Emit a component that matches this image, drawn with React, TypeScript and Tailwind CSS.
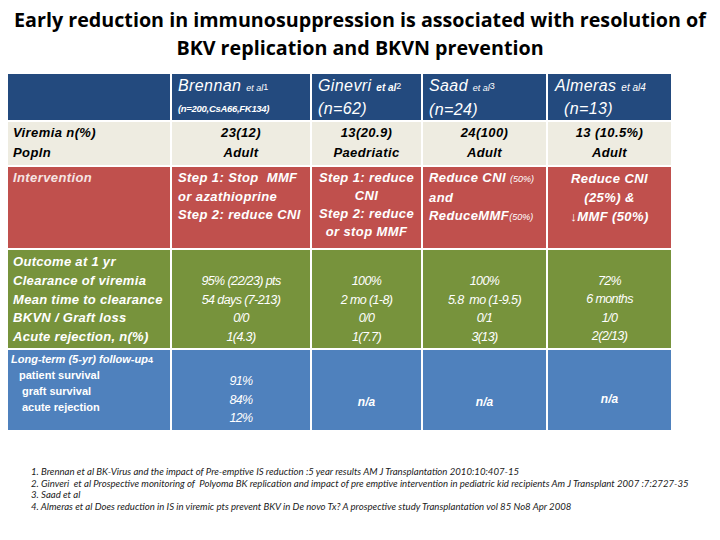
import React from 'react'

const arial = { fontFamily: '"Liberation Sans", Arial, sans-serif' }

const Sup = ({ children }: { children: React.ReactNode }) => (
  <span className="text-[9px] not-italic align-top relative top-[1px]">{children}</span>
)

const Lines = ({ lines, className = '' }: { lines: string[]; className?: string }) => (
  <div className={className}>
    {lines.map((l, i) => (
      <div key={i} className="whitespace-pre">
        {l || '\u00a0'}
      </div>
    ))}
  </div>
)

// condensed figures in the outcome / follow-up cells
const num = 'text-white text-[12.5px] tracking-[-0.6px] text-center'

const footnotes = [
  '1. Brennan et al BK-Virus and the impact of Pre-emptive IS reduction :5 year results AM J Transplantation 2010:10:407-15',
  '2. Ginveri  et al Prospective monitoring of  Polyoma BK replication and impact of pre emptive intervention in pediatric kid recipients Am J Transplant 2007 :7:2727-35',
  '3. Saad et al',
  '4. Almeras et al Does reduction in IS in viremic pts prevent BKV in De novo Tx? A prospective study Transplantation vol 85 No8 Apr 2008',
]

export default function App() {
  return (
    <div className="w-[720px] h-[540px] bg-white overflow-hidden">
      <div
        className="pt-[6px] text-center font-bold text-[19.7px] leading-[28px] text-black"
        style={{ fontFamily: '"Open Sans", Lato, sans-serif' }}
      >
        <div>Early reduction in immunosuppression is associated with resolution of</div>
        <div>BKV replication and BKVN prevention</div>
      </div>

      <div
        className="mt-[12px] ml-[8px] w-[663px] grid grid-cols-[162px_138px_109px_123px_123px] grid-rows-[46px_43px_81px_98px_80px] gap-[2px] bg-white italic tracking-[0.4px]"
        style={arial}
      >
        {/* header */}
        <div className="bg-[#234a7e]" />
        <div className="bg-[#234a7e] text-white pl-[6px] pt-[1px]">
          <div className="text-[16px] leading-[22px]">
            Brennan <span className="text-[9px] tracking-normal">et al</span>
            <Sup>1</Sup>
          </div>
          <div className="text-[9.5px] font-bold leading-[20px] tracking-[-0.3px]">(n=200,CsA66,FK134)</div>
        </div>
        <div className="bg-[#234a7e] text-white pl-[6px] pt-[1px] text-[16px] leading-[21px]">
          <div>
            Ginevri <span className="text-[10px] font-bold tracking-normal">et al</span>
            <Sup>2</Sup>
          </div>
          <div>(n=62)</div>
        </div>
        <div className="bg-[#234a7e] text-white pl-[6px] pt-[1px] text-[16px] leading-[21px]">
          <div>
            Saad <span className="text-[9px] tracking-normal">et al</span>
            <Sup>3</Sup>
          </div>
          <div>(n=24)</div>
        </div>
        <div className="bg-[#234a7e] text-white pl-[7px] pt-[1px] text-[16px] leading-[21px]">
          <div>
            Almeras <span className="text-[10px] tracking-normal">et al4</span>
          </div>
          <div className="pl-[9px]">(n=13)</div>
        </div>

        {/* viremia */}
        <Lines
          lines={['Viremia n(%)', 'Popln']}
          className="bg-[#eeece1] text-black font-bold text-[13px] leading-[20px] pl-[5px] pt-[1px]"
        />
        <Lines
          lines={['23(12)', 'Adult']}
          className="bg-[#eeece1] text-black font-bold text-[13px] leading-[20px] text-center pt-[1px]"
        />
        <Lines
          lines={['13(20.9)', 'Paedriatic']}
          className="bg-[#eeece1] text-black font-bold text-[13px] leading-[20px] text-center pt-[1px]"
        />
        <Lines
          lines={['24(100)', 'Adult']}
          className="bg-[#eeece1] text-black font-bold text-[13px] leading-[20px] text-center pt-[1px]"
        />
        <Lines
          lines={['13 (10.5%)', 'Adult']}
          className="bg-[#eeece1] text-black font-bold text-[13px] leading-[20px] text-center pt-[1px]"
        />

        {/* intervention */}
        <Lines
          lines={['Intervention']}
          className="bg-[#c0504d] text-[#f6e4e3] font-bold text-[13px] leading-[18px] pl-[5px] pt-[2px]"
        />
        <Lines
          lines={['Step 1: Stop  MMF', 'or azathioprine', 'Step 2: reduce CNI']}
          className="bg-[#c0504d] text-white font-bold text-[13px] leading-[18.5px] pl-[6px] pt-[2px]"
        />
        <Lines
          lines={['Step 1: reduce', 'CNI', 'Step 2: reduce', 'or stop MMF']}
          className="bg-[#c0504d] text-white font-bold text-[13px] leading-[18px] text-center pt-[2px]"
        />
        <div className="bg-[#c0504d] text-white font-bold text-[13px] leading-[18.5px] pl-[6px] pt-[2px]">
          <div>
            Reduce CNI <span className="text-[9px] font-normal tracking-normal">(50%)</span>
          </div>
          <div>and</div>
          <div>
            ReduceMMF<span className="text-[9px] font-normal tracking-normal">(50%)</span>
          </div>
        </div>
        <Lines
          lines={['Reduce CNI', '(25%) &', '\u2193MMF (50%)']}
          className="bg-[#c0504d] text-white font-bold text-[13px] leading-[19px] text-center pt-[2px]"
        />

        {/* outcome */}
        <Lines
          lines={[
            'Outcome at 1 yr',
            'Clearance of viremia',
            'Mean time to clearance',
            'BKVN / Graft loss',
            'Acute rejection, n(%)',
          ]}
          className="bg-[#77933c] text-white font-bold text-[13px] leading-[18.75px] pl-[5px] pt-[3px] tracking-[0.3px]"
        />
        <Lines
          lines={['', '95% (22/23) pts', '54 days (7-213)', '0/0', '1(4.3)']}
          className={`bg-[#77933c] ${num} leading-[18.75px] pt-[3px]`}
        />
        <Lines
          lines={['', '100%', '2 mo (1-8)', '0/0', '1(7.7)']}
          className={`bg-[#77933c] ${num} leading-[18.75px] pt-[3px]`}
        />
        <Lines
          lines={['', '100%', '5.8  mo (1-9.5)', '0/1', '3(13)']}
          className={`bg-[#77933c] ${num} leading-[18.75px] pt-[3px]`}
        />
        <Lines
          lines={['', '72%', '6 months', '1/0', '2(2/13)']}
          className={`bg-[#77933c] ${num} leading-[18.5px] pt-[3px]`}
        />

        {/* long-term */}
        <div className="bg-[#4f81bd] text-white font-bold text-[11px] leading-[16px] pt-[1px] pl-[3px] tracking-normal">
          <div>
            Long-term (5-yr) follow-up<Sup>4</Sup>
          </div>
          <div className="not-italic pl-[8px]">patient survival</div>
          <div className="not-italic pl-[11px]">graft survival</div>
          <div className="not-italic pl-[11px]">acute rejection</div>
        </div>
        <Lines lines={['91%', '84%', '12%']} className={`bg-[#4f81bd] ${num} leading-[18.5px] pt-[22px]`} />
        <div className="bg-[#4f81bd] text-white font-bold text-[12px] text-center pt-[43px] tracking-normal">n/a</div>
        <div className="bg-[#4f81bd] text-white font-bold text-[12px] text-center pt-[43px] tracking-normal">n/a</div>
        <div className="bg-[#4f81bd] text-white font-bold text-[12px] text-center pt-[40px] tracking-normal">n/a</div>
      </div>

      <div
        className="mt-[36px] pl-[31px] italic text-[9.6px] leading-[11.7px] text-[#1a1a1a]"
        style={{ fontFamily: 'Lato, "Open Sans", sans-serif' }}
      >
        {footnotes.map((f, i) => (
          <div key={i} className="whitespace-pre">
            {f}
          </div>
        ))}
      </div>
    </div>
  )
}
